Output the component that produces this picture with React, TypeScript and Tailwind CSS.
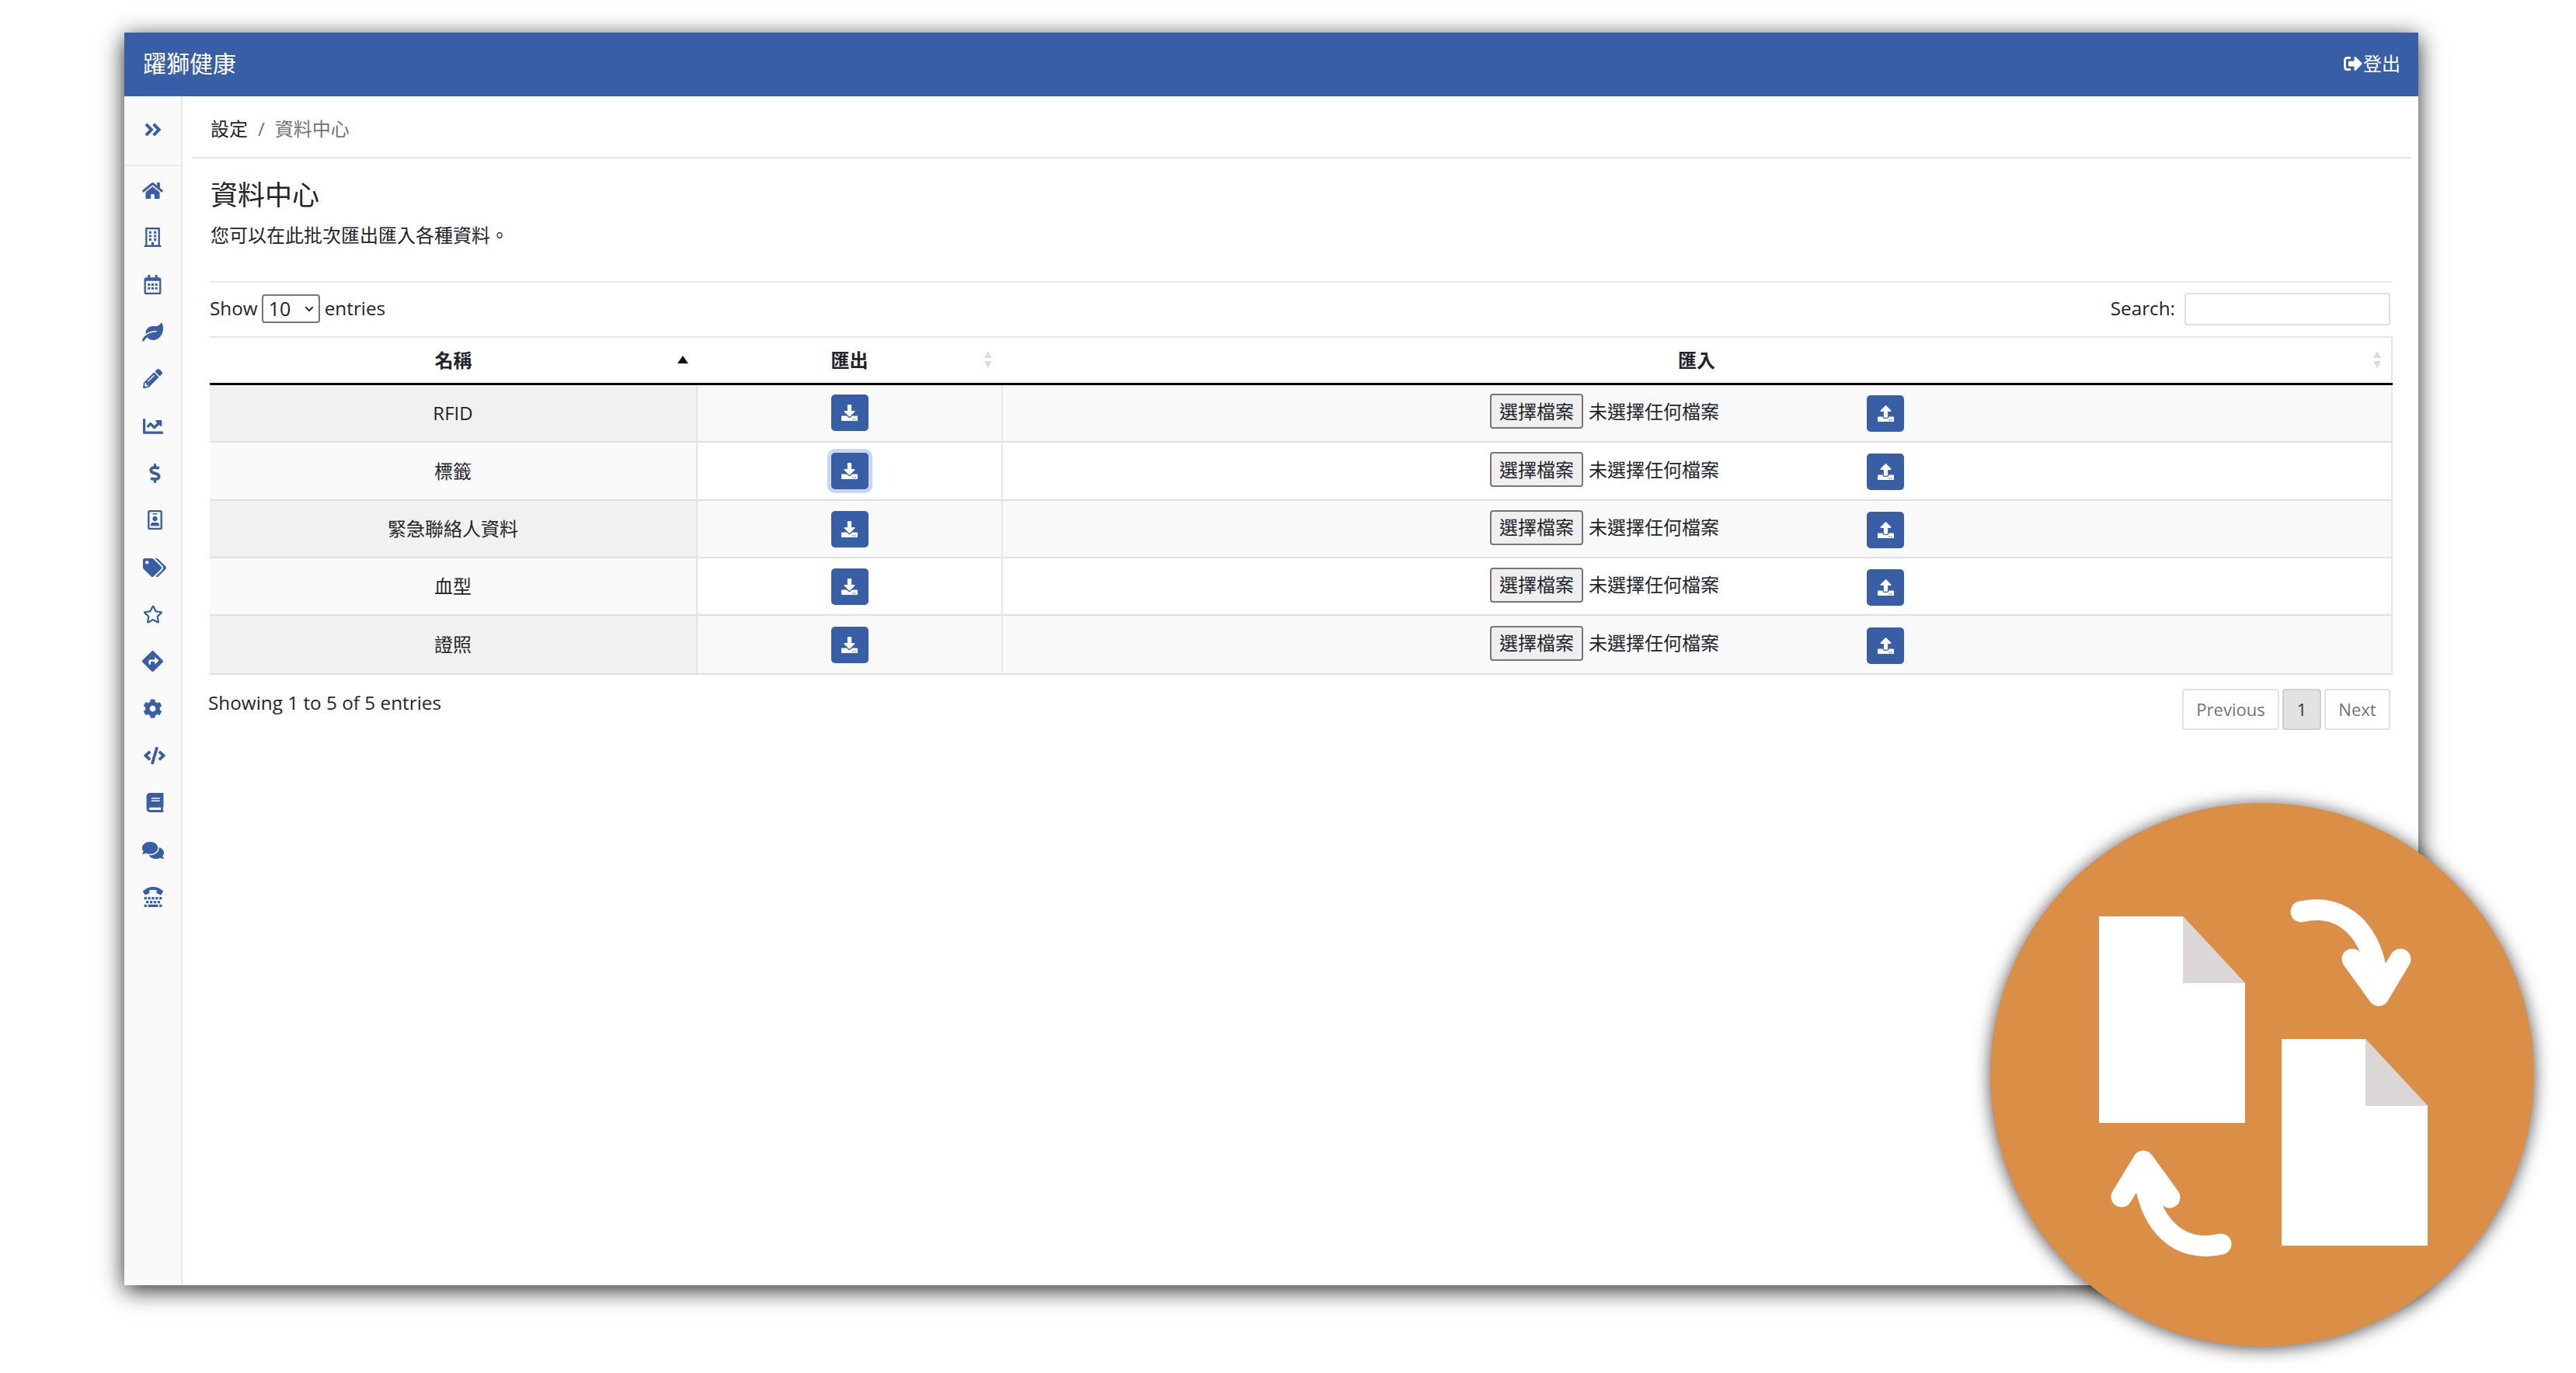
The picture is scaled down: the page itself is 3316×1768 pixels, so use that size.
import {
  FaAngleDoubleRight,
  FaBook,
  FaChartLine,
  FaChevronDown,
  FaCode,
  FaCog,
  FaComments,
  FaDirections,
  FaDollarSign,
  FaDownload,
  FaHome,
  FaLeaf,
  FaPencilAlt,
  FaRegBuilding,
  FaRegCalendarAlt,
  FaRegIdBadge,
  FaRegStar,
  FaSignOutAlt,
  FaTags,
  FaTty,
  FaUpload,
} from "react-icons/fa";

const navItems = [
  { icon: FaHome, cls: "text-[27px]" },
  { icon: FaRegBuilding, cls: "text-[25px]" },
  { icon: FaRegCalendarAlt, cls: "text-[25px]" },
  { icon: FaLeaf, cls: "text-[27px]" },
  { icon: FaPencilAlt, cls: "text-[25px]" },
  { icon: FaChartLine, cls: "text-[26px]" },
  { icon: FaDollarSign, cls: "text-[25px] ml-[5px]" },
  { icon: FaRegIdBadge, cls: "text-[25px] ml-[5px]" },
  { icon: FaTags, cls: "text-[30px] ml-[5px]" },
  { icon: FaRegStar, cls: "text-[26px]" },
  { icon: FaDirections, cls: "text-[27px]" },
  { icon: FaCog, cls: "text-[25px]" },
  { icon: FaCode, cls: "text-[28px] ml-[5px]" },
  { icon: FaBook, cls: "text-[25px] ml-[5px]" },
  { icon: FaComments, cls: "text-[28px]" },
  { icon: FaTty, cls: "text-[26px]" },
];

const rows = [
  { name: "RFID", h: "h-[75px]", odd: true },
  { name: "標籤", h: "h-[75px]", odd: false, focus: true },
  { name: "緊急聯絡人資料", h: "h-[74px]", odd: true },
  { name: "血型", h: "h-[74px]", odd: false },
  { name: "證照", h: "h-[76px]", odd: true },
];

function SortArrows() {
  return (
    <svg width="12" height="24" viewBox="0 0 12 24" className="absolute right-[12px] top-[16px]">
      <path d="M6 1 L11 10 H1 Z" fill="#dcdcdc" />
      <path d="M6 23 L11 14 H1 Z" fill="#dcdcdc" />
    </svg>
  );
}

function ExchangeBadge() {
  return (
    <div className="absolute left-[2562px] top-[1034px] h-[700px] w-[700px] rounded-full bg-[#db8e46] shadow-[0_2px_22px_rgba(0,0,0,0.7)]">
      <svg width="700" height="700" viewBox="0 0 700 700">
        <path d="M140 146 H248 L328 232 V412 H140 Z" fill="#ffffff" />
        <path d="M248 146 L328 232 H248 Z" fill="#dbd7d6" />
        <path d="M375 304 H483 L563 390 V570 H375 Z" fill="#ffffff" />
        <path d="M483 304 L563 390 H483 Z" fill="#dbd7d6" />
        <g fill="none" stroke="#ffffff" strokeWidth="27" strokeLinecap="round" strokeLinejoin="round">
          <path d="M400 140 C450 128 495 160 500 240" />
          <path d="M466 201 L500 248 L528 201" />
          <path d="M297 568 C247 580 202 548 197 468" />
          <path d="M231 508 L197 461 L169 507" />
        </g>
      </svg>
    </div>
  );
}

export default function App() {
  return (
    <div className="relative h-[1768px] w-[3316px] overflow-hidden bg-white pl-[160px] pt-[42px] font-['Open_Sans','Noto_Sans_CJK_TC',sans-serif] text-[24px] text-[#212529]">
      <div className="flex h-[1613px] w-[2953px] flex-col bg-white shadow-[0_6px_28px_rgba(0,0,0,0.85)]">
        <header className="flex h-[82px] items-center justify-between border-b-2 border-[#3a5ea8] bg-[#385ea5] pl-[24px] pr-[23px] text-white">
          <span className="pb-[2px] text-[30px]">躍獅健康</span>
          <span className="flex items-center gap-[1px]">
            <FaSignOutAlt className="text-[24px]" />
            登出
          </span>
        </header>

        <div className="flex flex-1">
          <aside className="w-[75px] border-r-2 border-[#e7e7e7] bg-[#fafafa]">
            <div className="flex h-[90px] items-center justify-center border-b-2 border-[#ececec] pb-[3px] text-[#385ea5]">
              <FaAngleDoubleRight className="text-[26px]" />
            </div>
            <nav className="pt-[1px] text-[#385ea5]">
              {navItems.map((item, i) => (
                <div key={i} className="flex h-[60.67px] items-center justify-center">
                  <item.icon className={item.cls} />
                </div>
              ))}
            </nav>
          </aside>

          <main className="flex-1">
            <div className="ml-[12px] mr-[10px] flex h-[80px] items-center border-b-2 border-[#e6e6e6] pl-[24px] pt-[5px]">
              <span>設定</span>
              <span className="mx-[13px] text-[#6c757d]">/</span>
              <span className="text-[#6c757d]">資料中心</span>
            </div>

            <div className="ml-[35px] w-[2810px]">
              <h1 className="pl-[1px] pt-[27px] text-[35px] leading-[40px] font-normal">資料中心</h1>
              <p className="pl-[1px] pt-[14px] leading-[36px]">您可以在此批次匯出匯入各種資料。</p>

              <div className="mt-[41px] flex h-[71px] items-center justify-between border-t-2 border-[#e8e8e8] pb-[2px] text-[24.3px]">
                <div className="flex items-center gap-[5px]">
                  <span>Show</span>
                  <div className="relative">
                    <select className="block h-[37px] w-[75px] appearance-none rounded-[4px] border-2 border-[#767676] bg-white pl-[7px] text-[25px] leading-none">
                      <option>10</option>
                    </select>
                    <FaChevronDown className="absolute right-[8px] top-[13px] text-[12px]" />
                  </div>
                  <span className="pl-[1px]">entries</span>
                </div>
                <div className="flex items-center gap-[12px]">
                  <span>Search:</span>
                  <input className="mr-[3px] h-[42px] w-[265px] rounded-[4px] border-2 border-[#dedede]" />
                </div>
              </div>

              <table className="w-full table-fixed border-collapse border-t-2 border-[#e8e8e8]">
                <colgroup>
                  <col className="w-[627px]" />
                  <col className="w-[393px]" />
                  <col />
                </colgroup>
                <thead>
                  <tr className="h-[60px] border-b-[3px] border-black">
                    <th className="relative">
                      名稱
                      <svg width="14" height="10" viewBox="0 0 14 10" className="absolute right-[11px] top-[23px]">
                        <path d="M7 0 L14 10 H0 Z" fill="#111111" />
                      </svg>
                    </th>
                    <th className="relative">
                      匯出
                      <SortArrows />
                    </th>
                    <th className="relative border-r-2 border-[#e6e6e6]">
                      匯入
                      <SortArrows />
                    </th>
                  </tr>
                </thead>
                <tbody>
                  {rows.map((row) => (
                    <tr
                      key={row.name}
                      className={`${row.h} border-b-2 border-[#dfdfdf] ${row.odd ? "bg-[#f9f9f9]" : "bg-white"}`}
                    >
                      <td
                        className={`border-r-2 border-[#e3e3e3] text-center ${row.odd ? "bg-[#f1f1f0]" : "bg-[#fafafa]"}`}
                      >
                        {row.name}
                      </td>
                      <td className="border-r-2 border-[#e6e6e6] text-center">
                        <button
                          className={`inline-flex h-[47px] w-[48px] items-center justify-center rounded-[5px] bg-[#385ea5] align-middle text-white ${row.focus ? "ring-[5px] ring-[#c8d6ee]" : ""}`}
                        >
                          <FaDownload className="text-[21px]" />
                        </button>
                      </td>
                      <td className="border-r-2 border-[#e6e6e6]">
                        <div className="flex items-center justify-center">
                          <button className="mb-[4px] h-[45px] w-[120px] rounded-[4px] border-2 border-[#767676] bg-[#efefef] text-[24px]">
                            選擇檔案
                          </button>
                          <span className="mb-[4px] w-[365px] pl-[7px]">未選擇任何檔案</span>
                          <button className="mt-[2px] inline-flex h-[47px] w-[48px] items-center justify-center rounded-[5px] bg-[#385ea5] text-white">
                            <FaUpload className="text-[21px]" />
                          </button>
                        </div>
                      </td>
                    </tr>
                  ))}
                </tbody>
              </table>

              <div className="mt-[18px] flex items-start justify-between">
                <span className="-ml-[2px] text-[24.3px] leading-[36px]">Showing 1 to 5 of 5 entries</span>
                <div className="mr-[3px] flex gap-[4px] text-[22px] text-[#6c757d]">
                  <span className="flex h-[53px] w-[125px] items-center justify-center rounded-[4px] border-2 border-[#dee2e6]">
                    Previous
                  </span>
                  <span className="flex h-[53px] w-[50px] items-center justify-center rounded-[4px] border-2 border-[#cfcfcf] bg-[#e2e2e2] text-[#333333]">
                    1
                  </span>
                  <span className="flex h-[53px] w-[85px] items-center justify-center rounded-[4px] border-2 border-[#dee2e6]">
                    Next
                  </span>
                </div>
              </div>
            </div>
          </main>
        </div>
      </div>
      <ExchangeBadge />
    </div>
  );
}
